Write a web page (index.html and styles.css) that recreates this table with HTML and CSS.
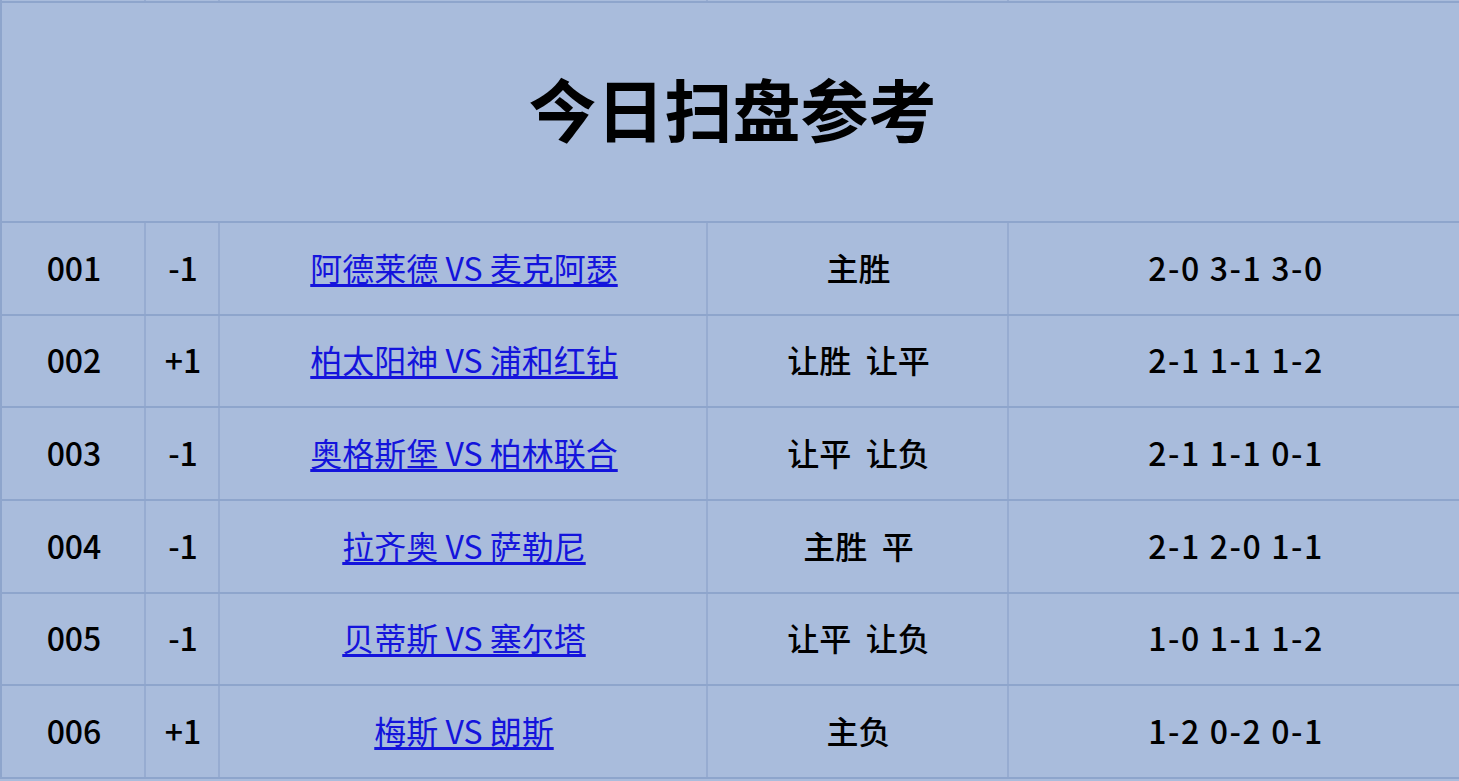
FILE: index.html
```html
<!DOCTYPE html>
<html lang="zh-CN">
<head>
<meta charset="utf-8">
<title>今日扫盘参考</title>
<link rel="stylesheet" href="styles.css">
</head>
<body>
<table class="sheet">
  <colgroup>
    <col class="c-no"><col class="c-hc"><col class="c-match"><col class="c-pick"><col class="c-score">
  </colgroup>
  <tr class="stub"><td></td><td></td><td></td><td></td><td></td></tr>
  <tr class="head"><td colspan="5"><h1 class="title">今日扫盘参考</h1></td></tr>
  <tr class="row">
    <td>001</td><td>-1</td><td><a href="#">阿德莱德 VS 麦克阿瑟</a></td><td class="pick">主胜</td><td class="score">2-0 3-1 3-0</td>
  </tr>
  <tr class="row">
    <td>002</td><td>+1</td><td><a href="#">柏太阳神 VS 浦和红钻</a></td><td class="pick">让胜&nbsp;&nbsp;让平</td><td class="score">2-1 1-1 1-2</td>
  </tr>
  <tr class="row">
    <td>003</td><td>-1</td><td><a href="#">奥格斯堡 VS 柏林联合</a></td><td class="pick">让平&nbsp;&nbsp;让负</td><td class="score">2-1 1-1 0-1</td>
  </tr>
  <tr class="row">
    <td>004</td><td>-1</td><td><a href="#">拉齐奥 VS 萨勒尼</a></td><td class="pick">主胜&nbsp;&nbsp;平</td><td class="score">2-1 2-0 1-1</td>
  </tr>
  <tr class="row">
    <td>005</td><td>-1</td><td><a href="#">贝蒂斯 VS 塞尔塔</a></td><td class="pick">让平&nbsp;&nbsp;让负</td><td class="score">1-0 1-1 1-2</td>
  </tr>
  <tr class="row">
    <td>006</td><td>+1</td><td><a href="#">梅斯 VS 朗斯</a></td><td class="pick">主负</td><td class="score">1-2 0-2 0-1</td>
  </tr>
</table>
</body>
</html>
```

FILE: styles.css
```css
html, body {
  margin: 0;
  padding: 0;
  background: #a9bcdc;
  overflow: hidden;
}
.sheet {
  border-collapse: collapse;
  table-layout: fixed;
  width: 1461px;
  background: #a9bcdc;
  font-family: "Noto Sans CJK SC", "Noto Sans", sans-serif;
  color: #000;
  border-left: 2px solid #8ea5cc;
}
.c-no { width: 144px; }
.c-hc { width: 74px; }
.c-match { width: 488px; }
.c-pick { width: 301px; }
.c-score { width: 454px; }
.sheet td {
  border: 2px solid #8ea5cc;
  border-right-color: #97acd1;
  text-align: center;
  padding: 0 0 0 2px;
  font-size: 32px;
  font-weight: 500;
  line-height: 1.2;
}
.stub td {
  border-top: none;
  height: 1px;
}
.head td {
  height: 218px;
}
.title {
  margin: 0;
  padding-bottom: 9px;
  font-size: 68px;
  font-weight: 700;
  line-height: 1;
}
.row td {
  height: 87.7px;
  padding-bottom: 3px;
}
.sheet a {
  color: #1414dc;
  font-weight: 400;
  text-decoration: underline;
  text-underline-offset: 3px;
}
.pick {
  font-weight: 700;
}
.sheet .score {
  letter-spacing: 1.6px;
}
```
